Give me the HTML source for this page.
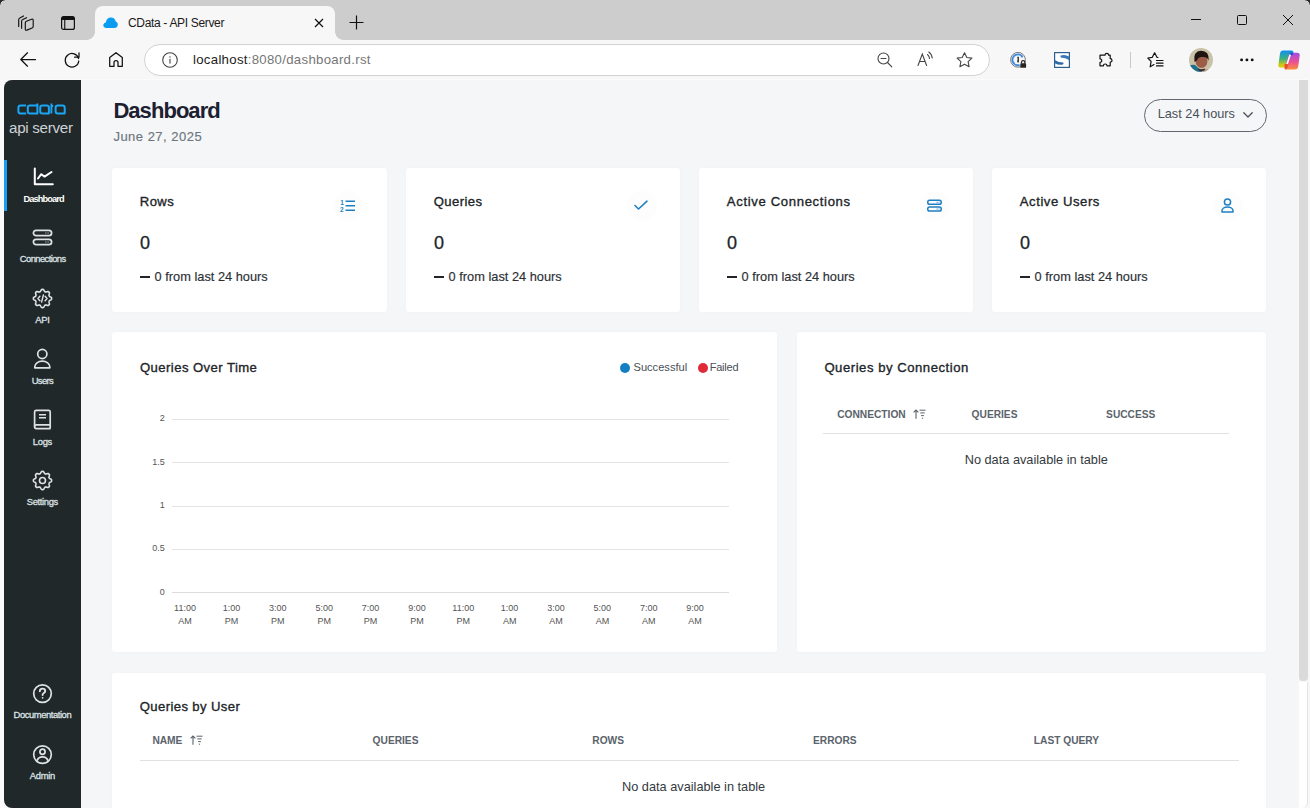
<!DOCTYPE html>
<html><head><meta charset="utf-8">
<style>
*{box-sizing:border-box;margin:0;padding:0}
html,body{width:1310px;height:808px;overflow:hidden;background:#f7f7f7;font-family:"Liberation Sans",sans-serif;position:relative}
.abs{position:absolute}
svg{position:absolute;overflow:visible}
.t{position:absolute;white-space:nowrap;line-height:1}
#tabstrip{left:0;top:0;width:1310px;height:40px;background:#cdcdcd}
#tab{left:95px;top:6px;width:240px;height:34px;background:#f7f7f7;border-radius:8px 8px 0 0}
#toolbar{left:0;top:40px;width:1310px;height:40px;background:#f7f7f7}
#addr{left:144px;top:44px;width:846px;height:32px;background:#fff;border:1px solid #d3d3d3;border-radius:16px}
.card{position:absolute;background:#fff;border-radius:3px;box-shadow:0 0 3px rgba(30,40,50,0.03)}
</style></head><body>
<!-- ===== Browser chrome ===== -->
<div id="tabstrip" class="abs"></div>
<!-- window corners -->
<div class="abs" style="left:0;top:0;width:5px;height:5px;background:radial-gradient(circle at 5px 5px,#cdcdcd 4.3px,#2a2a2a 5px)"></div>
<div class="abs" style="left:1305px;top:0;width:5px;height:5px;background:radial-gradient(circle at 0 5px,#cdcdcd 4.3px,#2a2a2a 5px)"></div>
<!-- workspaces icon -->
<svg style="left:18px;top:15px" width="16" height="16" viewBox="0 0 16 16" fill="none" stroke="#111" stroke-width="1.15" stroke-linejoin="round" stroke-linecap="round">
  <path d="M0.7 11.5V4.6Q0.7 3.4 1.8 2.9L5.6 0.9"/>
  <path d="M3.6 13.3V6.3Q3.6 5.1 4.7 4.6L8.6 2.7"/>
  <path d="M7.3 7.8Q7.3 6.6 8.4 6.2L13.6 4.2Q15.2 3.6 15.2 5.2V11.4Q15.2 12.6 14.1 13L8.9 15.1Q7.3 15.7 7.3 14.1Z"/>
</svg>
<!-- tab actions icon -->
<svg style="left:61px;top:16px" width="14" height="14" viewBox="0 0 14 14">
  <rect x="0.6" y="0.6" width="12.8" height="12.8" rx="2" fill="none" stroke="#111" stroke-width="1.2"/>
  <path d="M0.6 2.6A2 2 0 0 1 2.6 0.6H11.4A2 2 0 0 1 13.4 2.6V4H0.6Z" fill="#111"/>
  <rect x="3.2" y="4" width="1.1" height="9.4" fill="#111"/>
</svg>
<div id="tab" class="abs"></div>
<div class="abs" style="left:87px;top:32px;width:8px;height:8px;background:radial-gradient(circle at 0 0,#cdcdcd 7.5px,#f7f7f7 8px)"></div>
<div class="abs" style="left:335px;top:32px;width:8px;height:8px;background:radial-gradient(circle at 8px 0,#cdcdcd 7.5px,#f7f7f7 8px)"></div>
<!-- cloud favicon -->
<svg style="left:103px;top:17px" width="15" height="11" viewBox="0 0 15 11">
  <path d="M3.5 11C1.6 11 0.3 9.8 0.3 8.2C0.3 6.7 1.4 5.6 2.9 5.4C3.2 2.6 5.3 0.6 8 0.6C10.4 0.6 12.2 2.2 12.7 4.4C14 4.8 14.8 6 14.8 7.6C14.8 9.6 13.4 11 11.4 11Z" fill="#0a9cf0"/>
</svg>
<div class="t" style="left:128px;top:17px;font-size:12px;letter-spacing:-0.33px;color:#1a1a1a">CData - API Server</div>
<!-- tab close -->
<svg style="left:314px;top:18px" width="10" height="10" viewBox="0 0 10 10" stroke="#111" stroke-width="1.2"><path d="M1 1L9 9M9 1L1 9"/></svg>
<!-- new tab -->
<svg style="left:349px;top:15px" width="15" height="15" viewBox="0 0 15 15" stroke="#111" stroke-width="1.2"><path d="M7.5 0.5V14.5M0.5 7.5H14.5"/></svg>
<!-- window controls -->
<div class="abs" style="left:1191px;top:19px;width:10px;height:1.2px;background:#111"></div>
<div class="abs" style="left:1237px;top:15px;width:10px;height:10px;border:1.2px solid #111;border-radius:1.5px"></div>
<svg style="left:1283px;top:15px" width="10" height="10" viewBox="0 0 10 10" stroke="#111" stroke-width="1"><path d="M0 0L10 10M10 0L0 10"/></svg>

<div id="toolbar" class="abs"></div>
<!-- back -->
<svg style="left:20px;top:52px" width="16" height="15" viewBox="0 0 16 15" fill="none" stroke="#111" stroke-width="1.25" stroke-linecap="round" stroke-linejoin="round"><path d="M15.5 7.5H1M7.5 0.8L0.8 7.5L7.5 14.2"/></svg>
<!-- refresh -->
<svg style="left:64px;top:52px" width="16" height="16" viewBox="0 0 16 16" fill="none" stroke="#111" stroke-width="1.25" stroke-linecap="round" stroke-linejoin="round"><path d="M14.6 6.5A6.8 6.8 0 1 0 14.8 9"/><path d="M15 0.8V5.2H10.6"/></svg>
<!-- home -->
<svg style="left:109px;top:52px" width="14" height="15" viewBox="0 0 14 15" fill="none" stroke="#111" stroke-width="1.25" stroke-linejoin="round"><path d="M0.7 14.3V5.6L7 0.7L13.3 5.6V14.3H9V10.6A2 2 0 0 0 5 10.6V14.3Z"/></svg>

<div id="addr" class="abs"></div>
<!-- info icon -->
<svg style="left:162px;top:52px" width="16" height="16" viewBox="0 0 16 16"><circle cx="8" cy="8" r="7.3" fill="none" stroke="#444" stroke-width="1.1"/><rect x="7.4" y="6.8" width="1.2" height="4.8" fill="#555"/><rect x="7.4" y="4.3" width="1.2" height="1.3" fill="#555"/></svg>
<div class="t" style="left:193px;top:53.3px;font-size:13.2px;letter-spacing:0.3px;color:#1a1a1a">localhost<span style="color:#767676">:8080/dashboard.rst</span></div>
<!-- zoom out -->
<svg style="left:877px;top:52px" width="16" height="16" viewBox="0 0 16 16" fill="none" stroke="#444" stroke-width="1.1" stroke-linecap="round"><circle cx="6.5" cy="6.5" r="5.5"/><path d="M10.5 10.5L14.8 14.8M4 6.5H9"/></svg>
<!-- read aloud -->
<svg style="left:917px;top:51px" width="17" height="16" viewBox="0 0 17 16" fill="none" stroke="#444" stroke-width="1.1" stroke-linecap="round"><path d="M1 14.5L5.3 3L9.6 14.5M2.6 10.5H8"/><path d="M10.5 3.5Q12.3 5 12.5 7.5"/><path d="M11.8 1Q14.8 3 15.2 7"/></svg>
<!-- star -->
<svg style="left:956px;top:52px" width="17" height="16" viewBox="0 0 17 16" fill="none" stroke="#444" stroke-width="1.1" stroke-linejoin="round"><path d="M8.5 0.8L10.8 5.5L15.9 6.1L12.1 9.6L13.1 14.7L8.5 12.2L3.9 14.7L4.9 9.6L1.1 6.1L6.2 5.5Z"/></svg>

<!-- extension privacy icon -->
<svg style="left:1010px;top:51px" width="17" height="18" viewBox="0 0 17 18">
  <circle cx="8" cy="8.8" r="7.4" fill="none" stroke="#7a7a7a" stroke-width="1"/>
  <path d="M12.6 6.2A5.4 5.4 0 1 0 9.5 14" fill="none" stroke="#3f8de0" stroke-width="2"/>
  <rect x="7.3" y="5.8" width="1.6" height="5.6" fill="#2a2a2a"/>
  <circle cx="7.4" cy="8" r="0.5" fill="#fff"/>
  <rect x="10.3" y="12.2" width="5.8" height="4.6" rx="0.9" fill="#2a2420"/>
  <path d="M11.5 12.4V11.4A1.7 1.7 0 0 1 14.9 11.4V12.4" fill="none" stroke="#2a2420" stroke-width="1.2"/>
</svg>
<!-- S icon -->
<svg style="left:1054px;top:52px" width="16" height="16" viewBox="0 0 16 16">
  <rect x="0.6" y="0.6" width="14.8" height="14.8" fill="#fff" stroke="#2d5e92" stroke-width="1.2"/>
  <path d="M6.5 3.6Q11 2.2 15.2 4.6V8.2Q11.5 5.2 7.2 5.8Q6 5.6 6.5 3.6Z" fill="#3a78b8"/>
  <path d="M0.8 8Q4.5 10.5 9.2 10.6Q10 11.8 9 12.6Q4.5 13.5 0.8 11.2Z" fill="#2f6aa8"/>
</svg>
<!-- puzzle -->
<svg style="left:1099px;top:52px" width="15" height="16" viewBox="0 0 15 16" fill="none" stroke="#111" stroke-width="1.2" stroke-linejoin="round"><path d="M4.5 3.2H6A1.8 1.8 0 1 1 9.6 3.2H11.2V6.6A1.8 1.8 0 1 1 11.2 10.2V13.8H8A1.8 1.8 0 1 0 4.4 13.8H1V10.4A1.8 1.8 0 1 0 1 6.8V3.2Z"/></svg>
<div class="abs" style="left:1130px;top:52px;width:1px;height:16px;background:#c8c8c8"></div>
<!-- favorites -->
<svg style="left:1147px;top:52px" width="17" height="16" viewBox="0 0 17 16" fill="none" stroke="#111" stroke-width="1.2" stroke-linejoin="round" stroke-linecap="round"><path d="M11 5.5L10 5.3L7.6 0.8L5.3 5.3L0.8 6L4.1 9.4L3.2 14.8L7 12.6"/><path d="M9.5 8.5H16M9.5 11.2H16M9.5 13.9H16"/></svg>
<!-- avatar -->
<svg style="left:1189px;top:48px" width="24" height="24" viewBox="0 0 24 24">
  <defs><clipPath id="avc"><circle cx="12" cy="12" r="12"/></clipPath></defs>
  <g clip-path="url(#avc)">
    <rect width="24" height="24" fill="#c9c2a8"/>
    <path d="M0 24V18Q3 16 6 17Q9 20 12 22L14 24Z" fill="#1f6f8e"/>
    <path d="M12 24L15 21Q19 21 24 22V24Z" fill="#b89a95"/>
    <ellipse cx="12.5" cy="12.8" rx="6" ry="7.2" fill="#9c5d48"/>
    <path d="M5.5 14Q4 3 12 2.8Q20.5 2.8 19.8 13Q18.5 8.5 13.5 9Q9 8.5 8 12.5Z" fill="#1e1410"/>
    <path d="M9 20.5Q12 22 16 20.5L15.5 22.5Q12 23.5 9.5 22Z" fill="#3a2520"/>
  </g>
</svg>
<!-- more -->
<svg style="left:1238px;top:56px" width="18" height="8" viewBox="0 0 18 8" fill="#111"><circle cx="3.6" cy="3.9" r="1.45"/><circle cx="8.9" cy="3.9" r="1.45"/><circle cx="14.2" cy="3.9" r="1.45"/></svg>
<!-- copilot -->
<svg style="left:1278px;top:50px" width="22" height="20" viewBox="0 0 22 20">
  <defs>
    <linearGradient id="cpa" x1="0" y1="0" x2="0" y2="1"><stop offset="0" stop-color="#0f8ff0"/><stop offset="0.5" stop-color="#3db37a"/><stop offset="0.85" stop-color="#d8c810"/></linearGradient>
    <linearGradient id="cpb" x1="0" y1="0" x2="0" y2="1"><stop offset="0" stop-color="#9c4fe6"/><stop offset="0.55" stop-color="#ec4f92"/><stop offset="1" stop-color="#f7913a"/></linearGradient>
  </defs>
  <path d="M5 0.5H13.5Q16 0.5 15.3 3L11 16Q10.5 17.5 8.8 17.5H2.5Q0 17.5 0.4 15L2 3.5Q2.5 0.5 5 0.5Z" fill="url(#cpa)"/>
  <path d="M17 19.5H8.5Q6 19.5 6.7 17L11 4.5Q11.5 2.8 13.2 2.8H19.2Q22 2.8 21.7 5.5L20.2 16.5Q19.8 19.5 17 19.5Z" fill="url(#cpb)"/>
  <path d="M11.8 2.8H15.4L15.3 3L14.6 5.2H11.2Z" fill="#1d4fd0" opacity="0.9"/>
  <path d="M12.2 4.5L8.2 16.8" stroke="#fff" stroke-width="1.6"/>
  <path d="M6.5 14H10.5L9.5 17.5Q9 19.5 7 19.5Q6.2 17 6.5 14Z" fill="#e8522a"/>
</svg>
<div class="abs" style="left:0;top:80px;width:4px;height:728px;background:#fbfbfb"></div>
<div class="abs" style="left:4px;top:80px;width:1304px;height:728px;background:#f5f6f8;border-radius:8px 0 0 8px"></div>
<div class="abs" style="left:8px;top:79px;width:1300px;height:1px;background:#fbfbfb"></div>
<div class="abs" style="left:4px;top:80px;width:77px;height:728px;background:#212829;border-radius:8px 0 0 8px"></div>
<div class="abs" style="left:4px;top:160px;width:2.5px;height:51px;background:#1a9ff0"></div>
<svg style="left:17px;top:103px" width="50" height="12" viewBox="0 0 50 12" fill="none" stroke="#1aa6f4" stroke-width="2" stroke-linejoin="round">
<path d="M9.2 2.5H3.6Q1.4 2.5 1.4 4.7V8.3Q1.4 10.5 3.6 10.5H9.2"/>
<path d="M20.4 0.6V10.5H13Q10.8 10.5 10.8 8.3V4.7Q10.8 2.5 13 2.5H20.4"/>
<path d="M25.4 2.5H29.7Q31.9 2.5 31.9 4.7V10.5H25.4Q23.2 10.5 23.2 8.3V4.7Q23.2 2.5 25.4 2.5Z"/>
<path d="M34.4 0.6V10.5M34.4 3H36.2" stroke-width="1.9"/>
<path d="M40.8 2.5H45.5Q47.7 2.5 47.7 4.7V10.5H40.8Q38.6 10.5 38.6 8.3V4.7Q38.6 2.5 40.8 2.5Z"/>
</svg>
<div class="t" style="left:9px;top:119.83px;font-size:15.2px;color:#cdd2d6;letter-spacing:-0.3px;font-weight:normal">api server</div>
<svg style="left:33px;top:167px" width="21" height="19" viewBox="0 0 21 19" fill="none" stroke="#fff" stroke-width="2" stroke-linecap="round" stroke-linejoin="round"><path d="M1.8 1.5V17.2H19.8"/><path d="M5 11.5L8.3 7.2L11.6 9.6L18.5 5"/></svg>
<div class="t" style="left:3.60px;width:80px;text-align:center;top:194.81px;font-size:9.2px;color:#fff;font-weight:bold;letter-spacing:-0.85px;">Dashboard</div>
<svg style="left:32px;top:229px" width="21" height="18" viewBox="0 0 21 18" fill="none" stroke="#dee2e6" stroke-width="1.7"><rect x="1.4" y="1.35" width="18.2" height="5.3" rx="2.65"/><rect x="1.4" y="10.35" width="18.2" height="5.3" rx="2.65"/><path d="M13.4 4H14.4M15.6 4H16.6M13.4 13H14.4M15.6 13H16.6" stroke-width="1.1"/></svg>
<div class="t" style="left:2.70px;width:80px;text-align:center;top:254.24px;font-size:9.4px;color:#dee2e6;letter-spacing:-0.58px;-webkit-text-stroke:0.28px #dee2e6;">Connections</div>
<svg style="left:32px;top:288px" width="21" height="21" viewBox="0 0 21 21" fill="none" stroke="#dee2e6" stroke-width="1.6" stroke-linejoin="round"><path d="M19.60 10.50L19.59 10.86L19.57 11.21L19.29 11.54L18.91 11.83L18.49 12.09L18.07 12.32L17.67 12.52L17.35 12.72L17.25 12.99L17.15 13.26L17.04 13.51L16.92 13.77L17.00 14.14L17.14 14.57L17.28 15.03L17.39 15.51L17.45 15.98L17.42 16.41L17.18 16.68L16.93 16.93L16.68 17.18L16.41 17.42L15.98 17.45L15.51 17.39L15.03 17.28L14.57 17.14L14.14 17.00L13.77 16.92L13.51 17.04L13.26 17.15L12.99 17.25L12.72 17.35L12.52 17.67L12.32 18.07L12.09 18.49L11.83 18.91L11.54 19.29L11.21 19.57L10.86 19.59L10.50 19.60L10.14 19.59L9.79 19.57L9.46 19.29L9.17 18.91L8.91 18.49L8.68 18.07L8.48 17.67L8.28 17.35L8.01 17.25L7.74 17.15L7.49 17.04L7.23 16.92L6.86 17.00L6.43 17.14L5.97 17.28L5.49 17.39L5.02 17.45L4.59 17.42L4.32 17.18L4.07 16.93L3.82 16.68L3.58 16.41L3.55 15.98L3.61 15.51L3.72 15.03L3.86 14.57L4.00 14.14L4.08 13.77L3.96 13.51L3.85 13.26L3.75 12.99L3.65 12.72L3.33 12.52L2.93 12.32L2.51 12.09L2.09 11.83L1.71 11.54L1.43 11.21L1.41 10.86L1.40 10.50L1.41 10.14L1.43 9.79L1.71 9.46L2.09 9.17L2.51 8.91L2.93 8.68L3.33 8.48L3.65 8.28L3.75 8.01L3.85 7.74L3.96 7.49L4.08 7.23L4.00 6.86L3.86 6.43L3.72 5.97L3.61 5.49L3.55 5.02L3.58 4.59L3.82 4.32L4.07 4.07L4.32 3.82L4.59 3.58L5.02 3.55L5.49 3.61L5.97 3.72L6.43 3.86L6.86 4.00L7.23 4.08L7.49 3.96L7.74 3.85L8.01 3.75L8.28 3.65L8.48 3.33L8.68 2.93L8.91 2.51L9.17 2.09L9.46 1.71L9.79 1.43L10.14 1.41L10.50 1.40L10.86 1.41L11.21 1.43L11.54 1.71L11.83 2.09L12.09 2.51L12.32 2.93L12.52 3.33L12.72 3.65L12.99 3.75L13.26 3.85L13.51 3.96L13.77 4.08L14.14 4.00L14.57 3.86L15.03 3.72L15.51 3.61L15.98 3.55L16.41 3.58L16.68 3.82L16.93 4.07L17.18 4.32L17.42 4.59L17.45 5.02L17.39 5.49L17.28 5.97L17.14 6.43L17.00 6.86L16.92 7.23L17.04 7.49L17.15 7.74L17.25 8.01L17.35 8.28L17.67 8.48L18.07 8.68L18.49 8.91L18.91 9.17L19.29 9.46L19.57 9.79L19.59 10.14Z"/><path d="M7.9 8.3L5.9 10.5L7.9 12.7M13.1 8.3L15.1 10.5L13.1 12.7M11.4 7L9.6 14" stroke-width="1.4" stroke-linecap="round"/></svg>
<div class="t" style="left:2.40px;width:80px;text-align:center;top:314.74px;font-size:9.4px;color:#dee2e6;letter-spacing:-0.3px;-webkit-text-stroke:0.28px #dee2e6;">API</div>
<svg style="left:33px;top:348px" width="19" height="21" viewBox="0 0 19 21" fill="none" stroke="#dee2e6" stroke-width="1.7"><circle cx="9.3" cy="6" r="4.6"/><path d="M1.8 19.8V18.8A7.5 5.6 0 0 1 16.8 18.8V19.8Z" stroke-linejoin="round"/></svg>
<div class="t" style="left:2.40px;width:80px;text-align:center;top:375.64px;font-size:9.4px;color:#dee2e6;letter-spacing:-0.6px;-webkit-text-stroke:0.28px #dee2e6;">Users</div>
<svg style="left:33px;top:409px" width="19" height="21" viewBox="0 0 19 21" fill="none" stroke="#dee2e6" stroke-width="1.7" stroke-linejoin="round"><path d="M17.2 15.8V3Q17.2 1.4 15.6 1.4H3.2Q1.6 1.4 1.6 3V17.8Q1.6 19.6 3.4 19.6H17.6"/><path d="M1.6 17.6Q1.6 15.8 3.4 15.8H17.2V19.6"/><path d="M6 5.8H13M6 8.8H13" stroke-width="1.6"/></svg>
<div class="t" style="left:2.40px;width:80px;text-align:center;top:436.54px;font-size:9.4px;color:#dee2e6;letter-spacing:-0.3px;-webkit-text-stroke:0.28px #dee2e6;">Logs</div>
<svg style="left:32px;top:470px" width="21" height="21" viewBox="0 0 21 21" fill="none" stroke="#dee2e6" stroke-width="1.6" stroke-linejoin="round"><path d="M19.60 10.50L19.59 10.86L19.57 11.21L19.29 11.54L18.91 11.83L18.49 12.09L18.07 12.32L17.67 12.52L17.35 12.72L17.25 12.99L17.15 13.26L17.04 13.51L16.92 13.77L17.00 14.14L17.14 14.57L17.28 15.03L17.39 15.51L17.45 15.98L17.42 16.41L17.18 16.68L16.93 16.93L16.68 17.18L16.41 17.42L15.98 17.45L15.51 17.39L15.03 17.28L14.57 17.14L14.14 17.00L13.77 16.92L13.51 17.04L13.26 17.15L12.99 17.25L12.72 17.35L12.52 17.67L12.32 18.07L12.09 18.49L11.83 18.91L11.54 19.29L11.21 19.57L10.86 19.59L10.50 19.60L10.14 19.59L9.79 19.57L9.46 19.29L9.17 18.91L8.91 18.49L8.68 18.07L8.48 17.67L8.28 17.35L8.01 17.25L7.74 17.15L7.49 17.04L7.23 16.92L6.86 17.00L6.43 17.14L5.97 17.28L5.49 17.39L5.02 17.45L4.59 17.42L4.32 17.18L4.07 16.93L3.82 16.68L3.58 16.41L3.55 15.98L3.61 15.51L3.72 15.03L3.86 14.57L4.00 14.14L4.08 13.77L3.96 13.51L3.85 13.26L3.75 12.99L3.65 12.72L3.33 12.52L2.93 12.32L2.51 12.09L2.09 11.83L1.71 11.54L1.43 11.21L1.41 10.86L1.40 10.50L1.41 10.14L1.43 9.79L1.71 9.46L2.09 9.17L2.51 8.91L2.93 8.68L3.33 8.48L3.65 8.28L3.75 8.01L3.85 7.74L3.96 7.49L4.08 7.23L4.00 6.86L3.86 6.43L3.72 5.97L3.61 5.49L3.55 5.02L3.58 4.59L3.82 4.32L4.07 4.07L4.32 3.82L4.59 3.58L5.02 3.55L5.49 3.61L5.97 3.72L6.43 3.86L6.86 4.00L7.23 4.08L7.49 3.96L7.74 3.85L8.01 3.75L8.28 3.65L8.48 3.33L8.68 2.93L8.91 2.51L9.17 2.09L9.46 1.71L9.79 1.43L10.14 1.41L10.50 1.40L10.86 1.41L11.21 1.43L11.54 1.71L11.83 2.09L12.09 2.51L12.32 2.93L12.52 3.33L12.72 3.65L12.99 3.75L13.26 3.85L13.51 3.96L13.77 4.08L14.14 4.00L14.57 3.86L15.03 3.72L15.51 3.61L15.98 3.55L16.41 3.58L16.68 3.82L16.93 4.07L17.18 4.32L17.42 4.59L17.45 5.02L17.39 5.49L17.28 5.97L17.14 6.43L17.00 6.86L16.92 7.23L17.04 7.49L17.15 7.74L17.25 8.01L17.35 8.28L17.67 8.48L18.07 8.68L18.49 8.91L18.91 9.17L19.29 9.46L19.57 9.79L19.59 10.14Z"/><circle cx="10.5" cy="10.5" r="3"/></svg>
<div class="t" style="left:2.40px;width:80px;text-align:center;top:497.04px;font-size:9.4px;color:#dee2e6;letter-spacing:-0.35px;-webkit-text-stroke:0.28px #dee2e6;">Settings</div>
<svg style="left:32px;top:683px" width="21" height="21" viewBox="0 0 21 21" fill="none" stroke="#dee2e6" stroke-width="1.7"><circle cx="10.5" cy="10.6" r="8.8"/><path d="M7.8 8.2Q7.8 5.6 10.5 5.6Q13.2 5.6 13.2 8Q13.2 9.3 11.8 10Q10.6 10.7 10.6 12" stroke-width="1.9" stroke-linecap="round"/><circle cx="10.6" cy="14.8" r="0.9" fill="#dee2e6" stroke="none"/></svg>
<div class="t" style="left:2.40px;width:80px;text-align:center;top:710.04px;font-size:9.4px;color:#dee2e6;letter-spacing:-0.42px;-webkit-text-stroke:0.28px #dee2e6;">Documentation</div>
<svg style="left:32px;top:744px" width="21" height="21" viewBox="0 0 21 21" fill="none" stroke="#dee2e6" stroke-width="1.7"><circle cx="10.5" cy="10.6" r="8.8"/><circle cx="10.5" cy="7.8" r="2.6"/><path d="M5 16.8Q6.2 12.8 10.5 12.8Q14.8 12.8 16 16.8"/></svg>
<div class="t" style="left:2.40px;width:80px;text-align:center;top:770.74px;font-size:9.4px;color:#dee2e6;letter-spacing:-0.3px;-webkit-text-stroke:0.28px #dee2e6;">Admin</div>
<div class="t" style="left:113.40px;top:100.18px;font-size:22px;color:#1c2030;font-weight:bold;letter-spacing:-0.95px;">Dashboard</div>
<div class="t" style="left:113.40px;top:129.60px;font-size:13px;color:#6c757d;letter-spacing:0.49px;-webkit-text-stroke:0.15px #6c757d;">June 27, 2025</div>
<div class="abs" style="left:1144px;top:99px;width:123px;height:33px;border:1px solid #60676e;border-radius:17px"></div>
<div class="t" style="left:1157.70px;top:108.21px;font-size:12.75px;color:#495057;">Last 24 hours</div>
<svg style="left:1243px;top:112px" width="10" height="6" viewBox="0 0 10 6" fill="none" stroke="#495057" stroke-width="1.3" stroke-linecap="round" stroke-linejoin="round"><path d="M0.8 0.8L5 5L9.2 0.8"/></svg>
<div class="card" style="left:112px;top:168px;width:275px;height:144px"></div>
<div class="abs" style="left:333px;top:191px;width:30px;height:30px;border-radius:50%;background:#fdfdfd"></div>
<svg style="left:340px;top:199px" width="16" height="14" viewBox="0 0 16 14"><text x="0.3" y="6" font-family="Liberation Sans" font-weight="bold" font-size="6.5" fill="#1f7fc3">1</text><text x="0" y="13" font-family="Liberation Sans" font-weight="bold" font-size="6.5" fill="#1f7fc3">2</text><path d="M5.5 2.3H15M5.5 6.8H15M5.5 11.3H15" stroke="#1f7fc3" stroke-width="1.4"/></svg>
<div class="t" style="left:139.80px;top:194.71px;font-size:13.1px;color:#212529;letter-spacing:0.411px;-webkit-text-stroke:0.35px #212529;">Rows</div>
<div class="t" style="left:140.00px;top:234.36px;font-size:18px;color:#212529;-webkit-text-stroke:0.3px #212529;">0</div>
<div class="abs" style="left:140px;top:276px;width:10px;height:2px;background:#212529"></div>
<div class="t" style="left:154.60px;top:270.86px;font-size:12.8px;color:#2b3035;-webkit-text-stroke:0.15px #2b3035;">0 from last 24 hours</div>
<div class="card" style="left:406px;top:168px;width:274px;height:144px"></div>
<div class="abs" style="left:627px;top:191px;width:30px;height:30px;border-radius:50%;background:#fdfdfd"></div>
<svg style="left:634px;top:200px" width="14" height="11" viewBox="0 0 14 11" fill="none" stroke="#1f7fc3" stroke-width="1.6" stroke-linecap="round" stroke-linejoin="round"><path d="M1 5.5L4.5 9L13 1.2"/></svg>
<div class="t" style="left:433.80px;top:194.71px;font-size:13.1px;color:#212529;letter-spacing:0.39px;-webkit-text-stroke:0.35px #212529;">Queries</div>
<div class="t" style="left:434.00px;top:234.36px;font-size:18px;color:#212529;-webkit-text-stroke:0.3px #212529;">0</div>
<div class="abs" style="left:434px;top:276px;width:10px;height:2px;background:#212529"></div>
<div class="t" style="left:448.60px;top:270.86px;font-size:12.8px;color:#2b3035;-webkit-text-stroke:0.15px #2b3035;">0 from last 24 hours</div>
<div class="card" style="left:699px;top:168px;width:274px;height:144px"></div>
<div class="abs" style="left:920px;top:191px;width:30px;height:30px;border-radius:50%;background:#fdfdfd"></div>
<svg style="left:927px;top:199px" width="15" height="14" viewBox="0 0 15 14" fill="none" stroke="#1f7fc3" stroke-width="1.5"><rect x="0.75" y="1.25" width="13.5" height="4.1" rx="1.8"/><rect x="0.75" y="7.9" width="13.5" height="4.1" rx="1.8"/><path d="M9.6 3.3H10.6M11.6 3.3H12.4M9.6 9.95H10.6M11.6 9.95H12.4" stroke-width="1.1"/></svg>
<div class="t" style="left:726.80px;top:194.71px;font-size:13.1px;color:#212529;letter-spacing:0.659px;-webkit-text-stroke:0.35px #212529;">Active Connections</div>
<div class="t" style="left:727.00px;top:234.36px;font-size:18px;color:#212529;-webkit-text-stroke:0.3px #212529;">0</div>
<div class="abs" style="left:727px;top:276px;width:10px;height:2px;background:#212529"></div>
<div class="t" style="left:741.60px;top:270.86px;font-size:12.8px;color:#2b3035;-webkit-text-stroke:0.15px #2b3035;">0 from last 24 hours</div>
<div class="card" style="left:992px;top:168px;width:274px;height:144px"></div>
<div class="abs" style="left:1213px;top:191px;width:30px;height:30px;border-radius:50%;background:#fdfdfd"></div>
<svg style="left:1221px;top:198px" width="14" height="15" viewBox="0 0 14 15" fill="none" stroke="#1f7fc3" stroke-width="1.5"><circle cx="6.5" cy="4" r="3.1"/><path d="M1 14V12.8A5.5 3.8 0 0 1 12 12.8V14Z" stroke-linejoin="round"/></svg>
<div class="t" style="left:1019.80px;top:194.71px;font-size:13.1px;color:#212529;letter-spacing:0.557px;-webkit-text-stroke:0.35px #212529;">Active Users</div>
<div class="t" style="left:1020.00px;top:234.36px;font-size:18px;color:#212529;-webkit-text-stroke:0.3px #212529;">0</div>
<div class="abs" style="left:1020px;top:276px;width:10px;height:2px;background:#212529"></div>
<div class="t" style="left:1034.60px;top:270.86px;font-size:12.8px;color:#2b3035;-webkit-text-stroke:0.15px #2b3035;">0 from last 24 hours</div>
<div class="card" style="left:112px;top:332px;width:665px;height:320px"></div>
<div class="t" style="left:140.00px;top:360.71px;font-size:13.1px;color:#212529;letter-spacing:0.438px;-webkit-text-stroke:0.35px #212529;">Queries Over Time</div>
<div class="abs" style="left:620.4px;top:363px;width:10px;height:10px;border-radius:50%;background:#137ec2"></div>
<div class="t" style="left:633.50px;top:362.40px;font-size:11.1px;color:#495057;">Successful</div>
<div class="abs" style="left:697.5px;top:363px;width:10px;height:10px;border-radius:50%;background:#e02a38"></div>
<div class="t" style="left:709.70px;top:362.49px;font-size:11px;color:#495057;letter-spacing:-0.2px;">Failed</div>
<div class="abs" style="left:172px;top:418.80px;width:557.3px;height:1px;background:#e4e4e4"></div>
<div class="t" style="left:134.80px;top:414.38px;font-size:9px;color:#555;text-align:right;width:30px;">2</div>
<div class="abs" style="left:172px;top:462.15px;width:557.3px;height:1px;background:#e4e4e4"></div>
<div class="t" style="left:134.80px;top:457.73px;font-size:9px;color:#555;text-align:right;width:30px;">1.5</div>
<div class="abs" style="left:172px;top:505.50px;width:557.3px;height:1px;background:#e4e4e4"></div>
<div class="t" style="left:134.80px;top:501.08px;font-size:9px;color:#555;text-align:right;width:30px;">1</div>
<div class="abs" style="left:172px;top:548.85px;width:557.3px;height:1px;background:#e4e4e4"></div>
<div class="t" style="left:134.80px;top:544.43px;font-size:9px;color:#555;text-align:right;width:30px;">0.5</div>
<div class="abs" style="left:172px;top:592.20px;width:557.3px;height:1px;background:#dcdcdc"></div>
<div class="t" style="left:134.80px;top:587.78px;font-size:9px;color:#555;text-align:right;width:30px;">0</div>
<div class="t" style="left:165.05px;top:603.98px;font-size:9px;color:#555;text-align:center;width:40px;">11:00</div>
<div class="t" style="left:165.05px;top:616.98px;font-size:9px;color:#555;text-align:center;width:40px;">AM</div>
<div class="t" style="left:211.42px;top:603.98px;font-size:9px;color:#555;text-align:center;width:40px;">1:00</div>
<div class="t" style="left:211.42px;top:616.98px;font-size:9px;color:#555;text-align:center;width:40px;">PM</div>
<div class="t" style="left:257.79px;top:603.98px;font-size:9px;color:#555;text-align:center;width:40px;">3:00</div>
<div class="t" style="left:257.79px;top:616.98px;font-size:9px;color:#555;text-align:center;width:40px;">PM</div>
<div class="t" style="left:304.16px;top:603.98px;font-size:9px;color:#555;text-align:center;width:40px;">5:00</div>
<div class="t" style="left:304.16px;top:616.98px;font-size:9px;color:#555;text-align:center;width:40px;">PM</div>
<div class="t" style="left:350.53px;top:603.98px;font-size:9px;color:#555;text-align:center;width:40px;">7:00</div>
<div class="t" style="left:350.53px;top:616.98px;font-size:9px;color:#555;text-align:center;width:40px;">PM</div>
<div class="t" style="left:396.90px;top:603.98px;font-size:9px;color:#555;text-align:center;width:40px;">9:00</div>
<div class="t" style="left:396.90px;top:616.98px;font-size:9px;color:#555;text-align:center;width:40px;">PM</div>
<div class="t" style="left:443.27px;top:603.98px;font-size:9px;color:#555;text-align:center;width:40px;">11:00</div>
<div class="t" style="left:443.27px;top:616.98px;font-size:9px;color:#555;text-align:center;width:40px;">PM</div>
<div class="t" style="left:489.64px;top:603.98px;font-size:9px;color:#555;text-align:center;width:40px;">1:00</div>
<div class="t" style="left:489.64px;top:616.98px;font-size:9px;color:#555;text-align:center;width:40px;">AM</div>
<div class="t" style="left:536.01px;top:603.98px;font-size:9px;color:#555;text-align:center;width:40px;">3:00</div>
<div class="t" style="left:536.01px;top:616.98px;font-size:9px;color:#555;text-align:center;width:40px;">AM</div>
<div class="t" style="left:582.38px;top:603.98px;font-size:9px;color:#555;text-align:center;width:40px;">5:00</div>
<div class="t" style="left:582.38px;top:616.98px;font-size:9px;color:#555;text-align:center;width:40px;">AM</div>
<div class="t" style="left:628.75px;top:603.98px;font-size:9px;color:#555;text-align:center;width:40px;">7:00</div>
<div class="t" style="left:628.75px;top:616.98px;font-size:9px;color:#555;text-align:center;width:40px;">AM</div>
<div class="t" style="left:675.12px;top:603.98px;font-size:9px;color:#555;text-align:center;width:40px;">9:00</div>
<div class="t" style="left:675.12px;top:616.98px;font-size:9px;color:#555;text-align:center;width:40px;">AM</div>
<div class="card" style="left:797px;top:332px;width:469px;height:320px"></div>
<div class="t" style="left:824.40px;top:360.91px;font-size:13.1px;color:#212529;letter-spacing:0.535px;-webkit-text-stroke:0.35px #212529;">Queries by Connection</div>
<div class="t" style="left:837.20px;top:410.27px;font-size:10.2px;color:#5b636b;font-weight:bold;">CONNECTION</div>
<svg style="left:913.2px;top:409px" width="13" height="10" viewBox="0 0 13 10" fill="none" stroke="#5b636b" stroke-width="1.1"><path d="M3 9.8V1M0.6 3.4L3 1L5.4 3.4"/><path d="M6.5 1.2H12.5M7.3 3.9H11.7M8.1 6.6H10.9M8.9 9.2H10.1" stroke-width="1"/></svg>
<div class="t" style="left:971.60px;top:410.27px;font-size:10.2px;color:#5b636b;font-weight:bold;">QUERIES</div>
<div class="t" style="left:1106.10px;top:410.27px;font-size:10.2px;color:#5b636b;font-weight:bold;">SUCCESS</div>
<div class="abs" style="left:823.4px;top:433px;width:405.6px;height:1px;background:#dfe2e5"></div>
<div class="t" style="left:964.70px;top:453.71px;font-size:12.75px;color:#343a40;">No data available in table</div>
<div class="card" style="left:112px;top:673px;width:1154px;height:200px"></div>
<div class="t" style="left:139.80px;top:700.01px;font-size:13.1px;color:#212529;letter-spacing:0.384px;-webkit-text-stroke:0.35px #212529;">Queries by User</div>
<div class="t" style="left:152.40px;top:735.87px;font-size:10.2px;color:#5b636b;font-weight:bold;">NAME</div>
<svg style="left:190.3px;top:734.6px" width="13" height="10" viewBox="0 0 13 10" fill="none" stroke="#5b636b" stroke-width="1.1"><path d="M3 9.8V1M0.6 3.4L3 1L5.4 3.4"/><path d="M6.5 1.2H12.5M7.3 3.9H11.7M8.1 6.6H10.9M8.9 9.2H10.1" stroke-width="1"/></svg>
<div class="t" style="left:372.60px;top:735.87px;font-size:10.2px;color:#5b636b;font-weight:bold;">QUERIES</div>
<div class="t" style="left:592.30px;top:735.87px;font-size:10.2px;color:#5b636b;font-weight:bold;">ROWS</div>
<div class="t" style="left:813.00px;top:735.87px;font-size:10.2px;color:#5b636b;font-weight:bold;">ERRORS</div>
<div class="t" style="left:1033.80px;top:735.87px;font-size:10.2px;color:#5b636b;font-weight:bold;">LAST QUERY</div>
<div class="abs" style="left:140px;top:760px;width:1099px;height:1px;background:#dfe2e5"></div>
<div class="t" style="left:622.00px;top:781.21px;font-size:12.75px;color:#343a40;">No data available in table</div>
<div class="abs" style="left:1298px;top:80px;width:12px;height:728px;background:#f7f7f7"></div>
<div class="abs" style="left:1299px;top:80px;width:9px;height:601px;background:#dadada;border-radius:0 0 4px 4px"></div>
<div class="abs" style="left:1299px;top:682px;width:9px;height:126px;background:#fff;border-right:1px solid #e4e4e4;border-radius:0 0 6px 0"></div>
</body></html>
